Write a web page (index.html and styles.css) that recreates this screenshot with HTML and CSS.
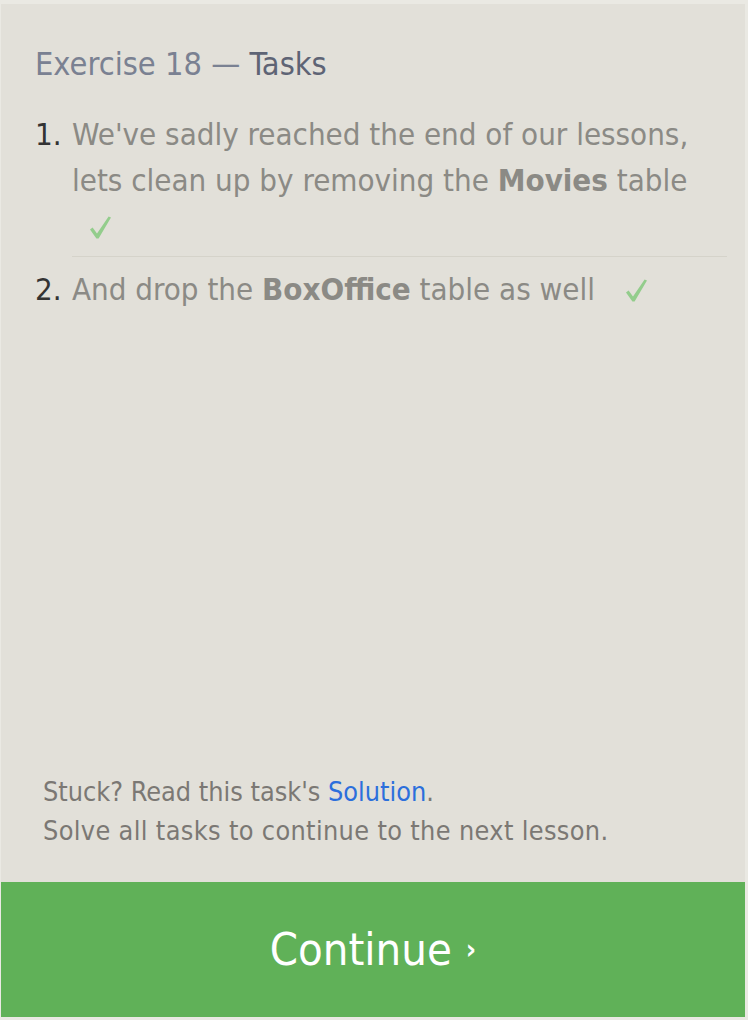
FILE: index.html
```html
<!DOCTYPE html>
<html>
<head>
<meta charset="utf-8">
<link rel="stylesheet" href="styles.css">
</head>
<body>
<div class="panel">
  <h2 class="title">Exercise 18 — <span class="title-strong">Tasks</span></h2>
  <ol class="tasks">
    <li class="task"><span class="num">1.</span><span class="text">We've sadly reached the end of our lessons, lets clean up by removing the <b>Movies</b> table <span class="check"><svg class="check-icon" viewBox="0 0 21 23" width="21" height="23"><path d="M0 13.5 L2.6 11.6 L7 17.6 L18.6 0.4 L21 1.6 L8.6 22.6 L6.4 22.6 Z"/></svg></span></span></li>
    <li class="task"><span class="num">2.</span><span class="text">And drop the <b>BoxOffice</b> table as well <span class="check"><svg class="check-icon" viewBox="0 0 21 23" width="21" height="23"><path d="M0 13.5 L2.6 11.6 L7 17.6 L18.6 0.4 L21 1.6 L8.6 22.6 L6.4 22.6 Z"/></svg></span></span></li>
  </ol>
  <div class="hint">
    <div>Stuck? Read this task's <a class="link" href="#">Solution</a>.</div>
    <div class="hint-line">Solve all tasks to continue to the next lesson.</div>
  </div>
  <div class="continue">Continue <span class="arrow">›</span></div>
</div>
</body>
</html>
```
FILE: styles.css
```css
html, body {
  margin: 0;
  padding: 0;
}
body {
  background: #eae9e3;
  width: 748px;
  height: 1020px;
  padding: 4px 3px 3px 1px;
  box-sizing: border-box;
  font-family: "DejaVu Sans Condensed", "DejaVu Sans", sans-serif;
  font-stretch: condensed;
}
.panel {
  background: #e2e0d9;
  height: 1013px;
  display: flex;
  flex-direction: column;
}
.title {
  margin: 0;
  padding: 40px 0 0 34px;
  font-size: 32.3px;
  line-height: 40px;
  font-weight: normal;
  color: #7a8192;
}
.title-strong {
  color: #5e6475;
}
.tasks {
  list-style: none;
  margin: 27px 18px 0 0;
  padding: 0;
}
.task {
  display: flex;
  font-size: 31px;
  line-height: 46px;
  color: #8b8a85;
}
.task + .task {
  margin-left: 71px;
  border-top: 1px solid #d5d3ca;
  padding-top: 9px;
  margin-top: 7px;
}
.task + .task .num {
  margin-left: -71px;
}
.num {
  width: 37px;
  flex: none;
  padding-left: 34px;
  color: #333333;
}
.text b {
  font-weight: bold;
}
.check {
  margin-left: 18px;
}
.task + .task .check {
  margin-left: 22px;
}
.check-icon {
  fill: #93cd8c;
  vertical-align: -2px;
}
.hint {
  margin-top: auto;
  padding: 0 0 32px 42px;
  font-size: 26.8px;
  line-height: 39px;
  color: #7b7874;
}
.hint-line {
  letter-spacing: 0.35px;
}
.link {
  color: #2c6fdc;
  text-decoration: none;
}
.continue {
  height: 135px;
  background: #60b158;
  color: #ffffff;
  display: flex;
  align-items: center;
  justify-content: center;
  font-size: 45px;
}
.arrow {
  font-size: 28px;
  font-weight: bold;
  margin-left: 14px;
}
```
